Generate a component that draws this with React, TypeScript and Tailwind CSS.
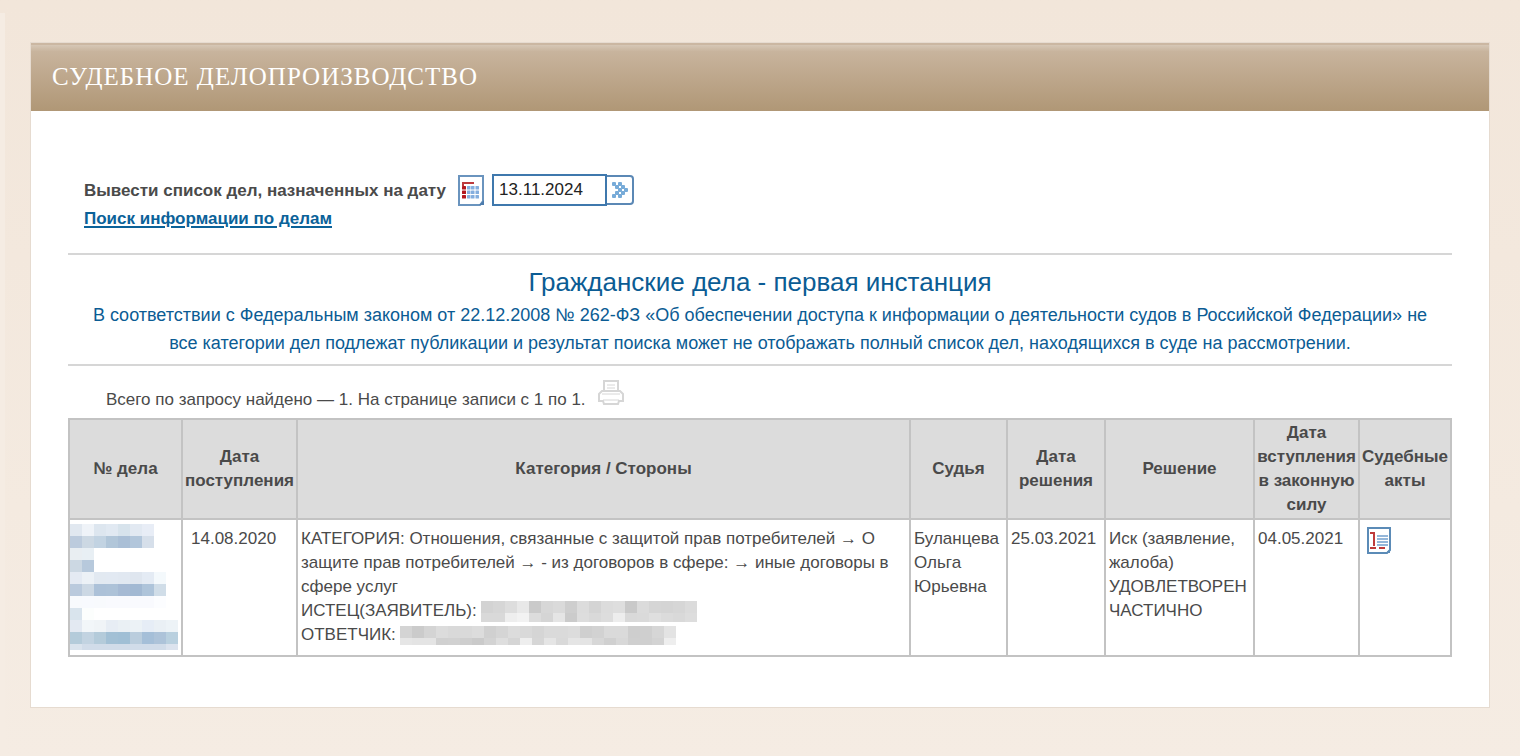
type CaseRow = {
  id: string;
  received: string;
  category: string;
  judge: string;
  decided: string;
  result: string;
  effective: string;
};

const columns = [
  { title: "№ дела", width: "w-[113px]" },
  { title: "Дата поступления", width: "w-[115px]" },
  { title: "Категория / Стороны", width: "" },
  { title: "Судья", width: "w-[97px]" },
  { title: "Дата решения", width: "w-[98px]" },
  { title: "Решение", width: "w-[149px]" },
  { title: "Дата вступления в законную силу", width: "w-[105px]" },
  { title: "Судебные акты", width: "w-[92px]" },
];

const rows: CaseRow[] = [
  {
    id: "1",
    received: "14.08.2020",
    category:
      "КАТЕГОРИЯ: Отношения, связанные с защитой прав потребителей → О защите прав потребителей → - из договоров в сфере: → иные договоры в сфере услуг",
    judge: "Буланцева Ольга Юрьевна",
    decided: "25.03.2021",
    result: "Иск (заявление, жалоба) УДОВЛЕТВОРЕН ЧАСТИЧНО",
    effective: "04.05.2021",
  },
];

const numberMask = [
  "#e1e8f0 #eff3f8 #dde6ef #e1e9f2 #d7e3ec #e2e9f2 #e8edf6",
  "#bccbdd #ccd8e3 #c2d3e2 #b1c6d9 #aabfd6 #b2c6db #d6dfea",
  "#e9eef2 #e8eff4",
  "#ccd8e3 #b7c9dc",
  "#e4eaf3 #ecf1f6 #e2e9f1 #e2e9f2 #e1e8f1 #dfe6ef #e4ebf4 #f4f9fc",
  "#bacadd #ccd8e4 #acc1d8 #adc2d8 #a6bad4 #a2b9d3 #aec4da #d0dde8",
  "#f8fafd #f8fafe #f8fafd #f9fafe #f9fafe #f9fafe #f9fafe #fcfdff",
  "#d9e4ed #fcfefd",
  "#e3e9f2 #f2f6f9 #f0f4f7 #e7edf4 #eaf0f4 #ecf2f6 #e6edf6 #eaf0f5 #edf3f7",
  "#b4cbda #c2d3e1 #b4cbda #a2c0d5 #a0bfd5 #bacddd #a5bfd8 #adc3d9 #b9d0df",
  "#dae3ed #d1dce9 #d1dce9 #d1dce9 #d1dce9 #d1dce9 #d1dce9 #d1dce9 #dce3ee",
];

const plaintiffMask = [
  "#d3d3d3 #d6d6d6 #dddddd #e8e8e8 #cacaca #d7d7d7 #dadada #cecece #dcdcdc #d4d4d4 #dcdcdc #dedede #c9c9c9 #dbdbdb #d5d5d5 #d4d4d4 #d6d6d6 #dbdbdb",
  "#d9d9d9 #d9d9d9 #eeeeee #f2f2f2 #dcdcdc #d5d5d5 #e5e5e5 #cbcbcb #dddddd #d9d9d9 #dddddd #ededed #d9d9d9 #dadada #dfdfdf #dbdbdb #d9d9d9 #dddddd",
];

const defendantMask = [
  "#d4d4d4 #cbcbcb #d4d4d4 #dcdcdc #d9d9d9 #d9d9d9 #dcdcdc #d0d0d0 #d5d5d5 #dcdcdc #d9d9d9 #d5d5d5 #dadada #dadada #dcdcdc #cfcfcf #d2d2d2 #dadada #dadada #cecece #cfcfcf #d6d6d6 #e3e3e3",
  "#e6e6e6 #e4e4e4 #e4e4e4 #d0d0d0 #d1d1d1 #cecece #cacaca #d3d3d3 #dedede #d5d5d5 #eeeeee #d6d6d6 #e5e5e5 #d9d9d9 #e5e5e5 #e4e4e4 #d7d7d7 #d0d0d0 #d8d8d8 #cfcfcf #cfcfcf #d3d3d3 #eeeeee",
];

export default function App() {
  return (
    <div className="flex min-h-screen bg-linear-to-b from-[#f2e6da] to-[#f5ece3] font-['Liberation_Sans',Arial,sans-serif] text-[17px] leading-[25px] text-[#4a4a4a]">
      <div className="mt-[13px] w-[5px] shrink-0 bg-[#f5ece3]" />
      <main className="mt-[42px] mr-[30px] mb-12 ml-[25px] min-w-0 flex-1 self-start border border-[#e6dbd0] bg-white">
        <header className="flex h-[68px] items-center border-t-2 border-[#cbb7a2] bg-linear-to-b from-[#d6c7b6] via-[#c8b49d] via-10% to-[#b09776] px-[21px] pb-1">
          <h1 className="font-['Liberation_Serif','Times_New_Roman',serif] text-[25px] tracking-[1px] text-white uppercase">
            Судебное делопроизводство
          </h1>
        </header>

        <div className="px-[37px] pt-[63px] pb-[50px]">
          <SearchPanel />
          <section className="mt-[22px] border-y-2 border-[#d6d6d6] px-3 pt-[11px] pb-[7px] text-center text-[#0b5c94]">
            <h2 className="text-[26px] leading-8">Гражданские дела - первая инстанция</h2>
            <p className="mt-[3px] text-lg leading-7">
              В соответствии с Федеральным законом от 22.12.2008 № 262-ФЗ «Об обеспечении доступа к информации о
              деятельности судов в Российской Федерации» не все категории дел подлежат публикации и результат поиска
              может не отображать полный список дел, находящихся в суде на рассмотрении.
            </p>
          </section>
          <div className="mt-[13px] flex h-[39px] items-start gap-3 pl-[38px]">
            <p className="pt-2">Всего по запросу найдено — 1. На странице записи с 1 по 1.</p>
            <button type="button" aria-label="Печать">
              <PrinterIcon />
            </button>
          </div>
          <CasesTable />
        </div>
      </main>
    </div>
  );
}

function SearchPanel() {
  return (
    <form className="pl-4 font-bold">
      <div className="flex h-8 items-center">
        <label htmlFor="case-date">Вывести список дел, назначенных на дату</label>
        <button type="button" aria-label="Календарь" className="ml-3">
          <CalendarIcon />
        </button>
        <input
          id="case-date"
          type="text"
          defaultValue="13.11.2024"
          className="ml-2 h-8 w-[115px] border-2 border-[#3f78ad] bg-white px-[5px] font-normal text-[#222] outline-none"
        />
        <button
          type="submit"
          aria-label="Показать"
          className="flex h-[30px] w-[27px] items-center justify-center rounded-r-sm border-2 border-l-0 border-[#5b88b5] bg-white"
        >
          <ArrowsIcon />
        </button>
      </div>
      <a href="#search" className="inline-block text-[#0b6299] underline decoration-2 underline-offset-2">
        Поиск информации по делам
      </a>
    </form>
  );
}

function CasesTable() {
  return (
    <table className="w-full table-fixed border-collapse border-2 border-[#c3c3c3] leading-6">
      <thead className="bg-[#dcdcdc]">
        <tr>
          {columns.map((column) => (
            <th key={column.title} className={`border-2 border-[#c3c3c3] py-px text-center font-bold ${column.width}`}>
              {column.title}
            </th>
          ))}
        </tr>
      </thead>
      <tbody>
        {rows.map((row) => (
          <tr key={row.id} className="align-top">
            <td className="border-2 border-[#c3c3c3] pt-1">
              <a href="#case" aria-label="Карточка дела">
                <Mosaic cells={numberMask} height={126} />
              </a>
            </td>
            <td className="border-2 border-[#c3c3c3] pt-[7px] pl-2">{row.received}</td>
            <td className="border-2 border-[#c3c3c3] px-[3px] pt-[7px] pb-2">
              <p>{row.category}</p>
              <p className="flex items-center gap-1">
                ИСТЕЦ(ЗАЯВИТЕЛЬ): <Mosaic cells={plaintiffMask} height={21} />
              </p>
              <p className="flex items-center gap-1">
                ОТВЕТЧИК: <Mosaic cells={defendantMask} height={19} />
              </p>
            </td>
            <td className="border-2 border-[#c3c3c3] px-[3px] pt-[7px]">{row.judge}</td>
            <td className="border-2 border-[#c3c3c3] pt-[7px] pl-[3px]">{row.decided}</td>
            <td className="border-2 border-[#c3c3c3] px-[3px] pt-[7px]">{row.result}</td>
            <td className="border-2 border-[#c3c3c3] pt-[7px] pl-[3px]">{row.effective}</td>
            <td className="border-2 border-[#c3c3c3] pt-[7px] pl-[7px]">
              <a href="#act" aria-label="Судебный акт" className="inline-block">
                <ActIcon />
              </a>
            </td>
          </tr>
        ))}
      </tbody>
    </table>
  );
}

// Pixelated cover over personal data, one colour per 12px cell.
function Mosaic({ cells, height }: { cells: string[]; height: number }) {
  const grid = cells.map((line) => line.split(" "));
  const width = Math.max(...grid.map((line) => line.length)) * 12;

  return (
    <svg width={width} height={height} shapeRendering="crispEdges" className="block shrink-0" aria-hidden="true">
      {grid.map((line, y) =>
        line.map((fill, x) => <rect key={`${x}-${y}`} x={x * 12} y={y * 12} width={12} height={12} fill={fill} />),
      )}
    </svg>
  );
}

function CalendarIcon() {
  return (
    <svg width="26" height="31" viewBox="0 0 26 31" className="block">
      <path d="M1 1h24v25l-3 4H1z" fill="#fff" stroke="#6a94be" strokeWidth="2" />
      <path d="M21 30l5-5v5z" fill="#4d7cad" />
      <path d="M5 11V8h11" fill="none" stroke="#bd3a3d" strokeWidth="2" />
      {[11, 15.5, 20].map((y) => (
        <g key={y}>
          <rect x="4" y={y} width="4" height="3.5" rx="0.5" fill="#b3191f" />
          {[9, 13, 17.5].map((x) => (
            <rect key={x} x={x} y={y} width="3.5" height="3.5" rx="0.5" fill="#84aede" />
          ))}
        </g>
      ))}
    </svg>
  );
}

function ArrowsIcon() {
  const dots = [
    [0, 0], [6, 0], [3, 3], [9, 3], [6, 6], [12, 6], [3, 9], [9, 9], [0, 12], [6, 12],
  ];

  return (
    <svg width="16" height="16" viewBox="0 0 16 16">
      {dots.map(([x, y]) => (
        <rect key={`${x}-${y}`} x={x} y={y} width="4" height="4" rx="1" fill="#77abd8" />
      ))}
    </svg>
  );
}

function PrinterIcon() {
  return (
    <svg width="26" height="27" viewBox="0 0 26 27" fill="#fff" stroke="#d6d6d6" strokeWidth="2">
      <path d="M6 12V2h14v10" />
      <path d="M9 6h8M9 9h8" strokeWidth="1" />
      <path d="M6 12H4l-3 3v7h4l1 3h14l1-3h4v-7l-3-3z" />
      <path d="M4 15h18M5 21h16" strokeWidth="1" />
    </svg>
  );
}

function ActIcon() {
  return (
    <svg width="24" height="27" viewBox="0 0 24 27" className="block">
      <path d="M1 1h22v22l-3 3H1z" fill="#fff" stroke="#5b8bb7" strokeWidth="2" />
      <path d="M19 26l4-4v4z" fill="#5b8bb7" />
      <path d="M10 9h11M10 12h11M10 15h11M10 18h11" stroke="#94b7da" strokeWidth="2" />
      <path d="M3 6h4v13" fill="none" stroke="#bf3b3b" strokeWidth="2" />
      <path d="M3 21h6M12 21h6" stroke="#bf3b3b" strokeWidth="2" />
    </svg>
  );
}
